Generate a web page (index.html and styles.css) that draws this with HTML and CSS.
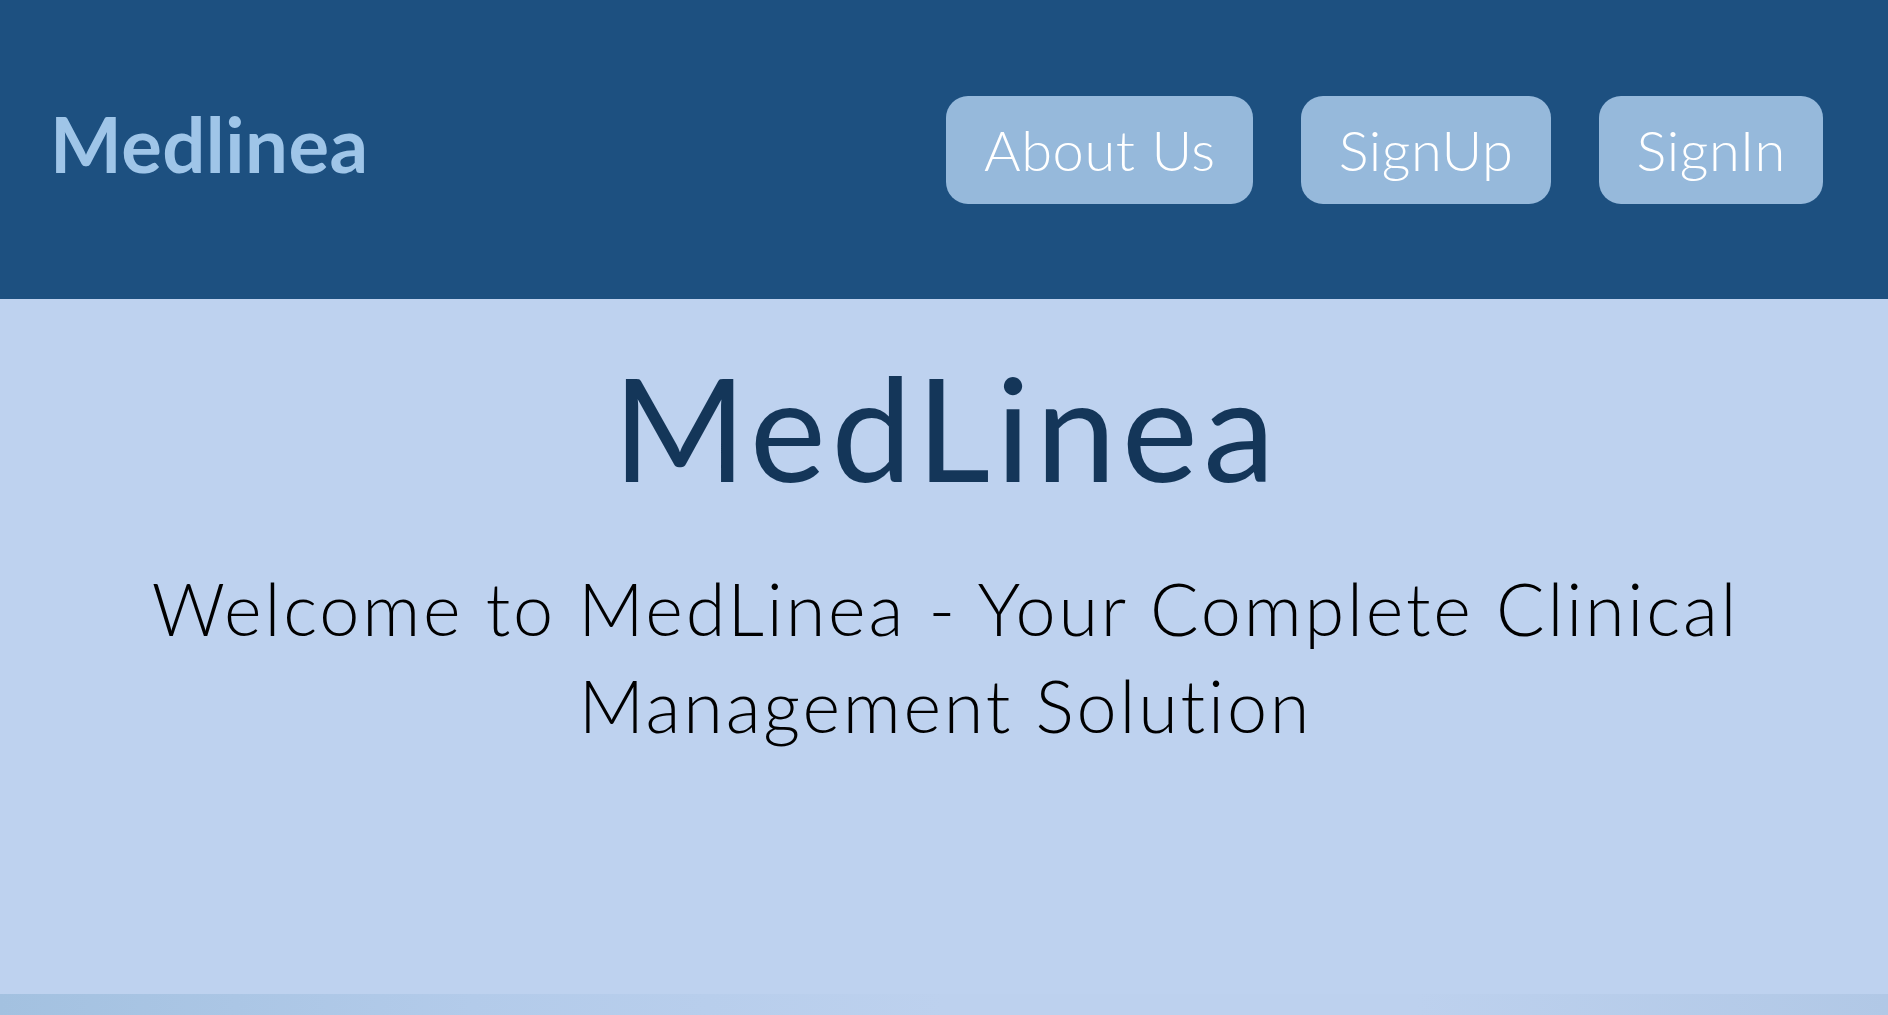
FILE: index.html
```html
<!DOCTYPE html>
<html lang="en">
<head>
<meta charset="utf-8">
<title>Medlinea</title>
<link rel="stylesheet" href="styles.css">
</head>
<body>
<header class="topbar">
  <div class="brand">Medlinea</div>
  <nav class="nav">
    <a class="nav-btn" href="#">About Us</a>
    <a class="nav-btn" href="#">SignUp</a>
    <a class="nav-btn" href="#">SignIn</a>
  </nav>
</header>
<main class="hero">
  <h1 class="hero-title">MedLinea</h1>
  <p class="hero-sub">Welcome to MedLinea - Your Complete Clinical<br>Management Solution</p>
</main>
<div class="strip"></div>
</body>
</html>
```
FILE: styles.css
```css
html, body {
  margin: 0;
  padding: 0;
  height: 100%;
}
body {
  background: #bed2ef;
  font-family: Lato, "Open Sans", sans-serif;
  font-variant-ligatures: none;
  display: flex;
  flex-direction: column;
  overflow: hidden;
}
.topbar {
  height: 299px;
  flex: none;
  background: #1d5080;
  display: flex;
  align-items: center;
  justify-content: space-between;
  padding: 0 65px 0 50px;
  box-sizing: border-box;
}
.brand {
  color: #9fc5e8;
  font-weight: 700;
  font-size: 76px;
  letter-spacing: 0.5px;
  margin-top: -12px;
}
.nav {
  display: flex;
  gap: 48px;
}
.nav-btn {
  display: flex;
  align-items: center;
  height: 108px;
  box-sizing: border-box;
  padding: 0 37px 0 38px;
  background: #96b9db;
  color: #fff;
  border-radius: 22px;
  text-decoration: none;
  font-weight: 300;
  font-size: 56px;
  letter-spacing: 0.6px;
}
.hero {
  flex: 1;
  text-align: center;
}
.hero-title {
  margin: 42px 0 0;
  padding-left: 5px;
  font-size: 144px;
  font-weight: 400;
  letter-spacing: 5.5px;
  color: #143659;
  line-height: 1.2;
}
.hero-sub {
  margin: 46px 0 0;
  padding-left: 3px;
  font-size: 72px;
  font-weight: 300;
  letter-spacing: 2.8px;
  line-height: 97px;
  color: #000;
}
.strip {
  height: 21px;
  flex: none;
  background: linear-gradient(90deg, #a3c1e0 0%, #b3cbea 25%, #bdd1ee 50%, #bdd1ee 75%, #b1c8e6 100%);
}
```
